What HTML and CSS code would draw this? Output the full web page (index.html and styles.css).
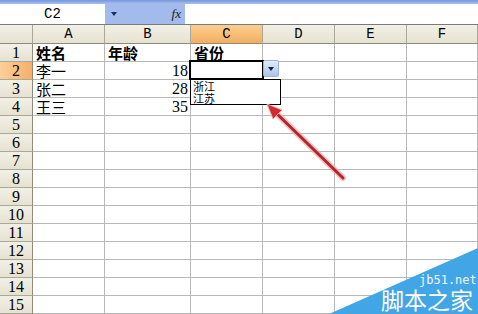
FILE: index.html
```html
<!DOCTYPE html>
<html>
<head>
<meta charset="utf-8">
<link rel="stylesheet" href="styles.css">
</head>
<body>
<div class="app">
  <div class="titlebar"></div>
  <div class="fbar">
    <div class="namebox">C2</div>
    <div class="nbtn"><span class="caret"></span><span class="fx">fx</span></div>
    <div class="formula"></div>
  </div>
  <div class="sheet">
    <div class="grid">
      <div class="hd corner"></div><div class="hd">A</div><div class="hd">B</div><div class="hd sel">C</div><div class="hd">D</div><div class="hd">E</div><div class="hd">F</div>

      <div class="rh">1</div><div class="c b">姓名</div><div class="c b">年龄</div><div class="c b">省份</div><div class="c"></div><div class="c"></div><div class="c"></div>
      <div class="rh sel">2</div><div class="c">李一</div><div class="c n">18</div><div class="c"></div><div class="c"></div><div class="c"></div><div class="c"></div>
      <div class="rh">3</div><div class="c">张二</div><div class="c n">28</div><div class="c"></div><div class="c"></div><div class="c"></div><div class="c"></div>
      <div class="rh">4</div><div class="c">王三</div><div class="c n">35</div><div class="c"></div><div class="c"></div><div class="c"></div><div class="c"></div>
      <div class="rh">5</div><div class="c"></div><div class="c"></div><div class="c"></div><div class="c"></div><div class="c"></div><div class="c"></div>
      <div class="rh">6</div><div class="c"></div><div class="c"></div><div class="c"></div><div class="c"></div><div class="c"></div><div class="c"></div>
      <div class="rh">7</div><div class="c"></div><div class="c"></div><div class="c"></div><div class="c"></div><div class="c"></div><div class="c"></div>
      <div class="rh">8</div><div class="c"></div><div class="c"></div><div class="c"></div><div class="c"></div><div class="c"></div><div class="c"></div>
      <div class="rh">9</div><div class="c"></div><div class="c"></div><div class="c"></div><div class="c"></div><div class="c"></div><div class="c"></div>
      <div class="rh">10</div><div class="c"></div><div class="c"></div><div class="c"></div><div class="c"></div><div class="c"></div><div class="c"></div>
      <div class="rh">11</div><div class="c"></div><div class="c"></div><div class="c"></div><div class="c"></div><div class="c"></div><div class="c"></div>
      <div class="rh">12</div><div class="c"></div><div class="c"></div><div class="c"></div><div class="c"></div><div class="c"></div><div class="c"></div>
      <div class="rh">13</div><div class="c"></div><div class="c"></div><div class="c"></div><div class="c"></div><div class="c"></div><div class="c"></div>
      <div class="rh">14</div><div class="c"></div><div class="c"></div><div class="c"></div><div class="c"></div><div class="c"></div><div class="c"></div>
      <div class="rh">15</div><div class="c"></div><div class="c"></div><div class="c"></div><div class="c"></div><div class="c"></div><div class="c"></div>
    </div>
    <div class="active"></div>
    <div class="ddbtn"><span class="ddcaret"></span></div>
    <div class="ddlist">
      <div class="opt">浙江</div>
      <div class="opt">江苏</div>
    </div>
  </div>
  <svg class="overlay" width="478" height="314" viewBox="0 0 478 314">
    <line x1="343" y1="178" x2="274" y2="111" stroke="#f3a6a6" stroke-width="6" stroke-linecap="round" opacity="0.7"/>
    <line x1="343" y1="178" x2="274" y2="111" stroke="#b3262a" stroke-width="3" stroke-linecap="round"/>
    <polygon points="267,104 282,110 273,119" fill="#d42a2e" stroke="#f3a6a6" stroke-width="1"/>
    <polygon points="329,314 478,248 478,314" fill="#42a6e6"/>
    <text x="419" y="284" class="wm1">jb51.net</text>
    <text x="381" y="309" class="wm2">脚本之家</text>
  </svg>
</div>
</body>
</html>
```

FILE: styles.css
```css
html, body {
  margin: 0;
  padding: 0;
  background: #fff;
  overflow: hidden;
}
.app {
  position: relative;
  width: 478px;
  height: 314px;
  overflow: hidden;
  font-family: "Noto Sans CJK SC", sans-serif;
}
.titlebar {
  height: 4px;
  background: linear-gradient(#7496dc, #a9bff0);
}
.fbar {
  display: flex;
  height: 20px;
  border-bottom: 1px solid #7a7a7a;
  background: #fff;
}
.namebox {
  width: 105px;
  text-align: center;
  font-family: "Liberation Mono", monospace;
  font-size: 14px;
  line-height: 21px;
  color: #000;
}
.nbtn {
  width: 80px;
  background: #a3bbec;
  display: flex;
  align-items: center;
  justify-content: space-between;
  padding: 0 4px 0 6px;
  box-sizing: border-box;
}
.caret {
  width: 0;
  height: 0;
  border-left: 3px solid transparent;
  border-right: 3px solid transparent;
  border-top: 4px solid #1a2a5a;
}
.fx {
  font-family: "Liberation Serif", serif;
  font-style: italic;
  font-size: 13px;
  color: #1a1a1a;
}
.formula {
  flex: 1;
}
.sheet {
  position: relative;
}
.grid {
  display: grid;
  grid-template-columns: 33px 72px 86px 72px 72px 72px 1fr;
  grid-template-rows: 19px repeat(15, 18px);
}
.hd, .rh {
  box-sizing: border-box;
  background: linear-gradient(#f2f0e6, #e6e2d2);
  border-right: 1px solid #aca899;
  border-bottom: 1px solid #8f8b7c;
  color: #000;
  text-align: center;
}
.hd {
  font-family: "Liberation Mono", monospace;
  font-size: 14px;
  line-height: 19px;
}
.rh {
  font-family: "Liberation Serif", serif;
  font-size: 16px;
  line-height: 18px;
  border-bottom: 1px solid #aca899;
  border-right: 1px solid #8f8b7c;
}
.hd.sel {
  background: linear-gradient(#fbcf91, #f4ae5e);
}
.rh.sel {
  background: linear-gradient(90deg, #fbd09a, #f4b06a);
}
.c {
  box-sizing: border-box;
  border-right: 1px solid #b8b8b8;
  border-bottom: 1px solid #b8b8b8;
  font-size: 15px;
  line-height: 17px;
  padding-left: 3px;
  color: #000;
  white-space: nowrap;
}
.c.b {
  font-weight: bold;
}
.c.n {
  text-align: right;
  padding-right: 2px;
  font-family: "Liberation Serif", serif;
  font-size: 16px;
}
.active {
  position: absolute;
  left: 189px;
  top: 35px;
  width: 75px;
  height: 20px;
  border: 2px solid #000;
  box-sizing: border-box;
}
.ddbtn {
  position: absolute;
  left: 263px;
  top: 35px;
  width: 16px;
  height: 17px;
  box-sizing: border-box;
  border: 1px solid #98b6dc;
  border-radius: 2px;
  background: linear-gradient(#e2ecf8, #a9c5e8);
  display: flex;
  align-items: center;
  justify-content: center;
}
.ddcaret {
  width: 0;
  height: 0;
  border-left: 3px solid transparent;
  border-right: 3px solid transparent;
  border-top: 4px solid #10204a;
}
.ddlist {
  position: absolute;
  left: 190px;
  top: 54px;
  width: 91px;
  height: 26px;
  box-sizing: border-box;
  border: 1px solid #000;
  background: #fff;
  padding: 0 2px;
}
.opt {
  font-size: 11px;
  line-height: 12px;
  color: #000;
}
.overlay {
  position: absolute;
  left: 0;
  top: 0;
  pointer-events: none;
}
.wm1 {
  font-family: "DejaVu Sans Mono", monospace;
  font-size: 12px;
  fill: #eef7ff;
}
.wm2 {
  font-family: "Noto Sans CJK SC", sans-serif;
  font-size: 23px;
  fill: #ffffff;
}
```
